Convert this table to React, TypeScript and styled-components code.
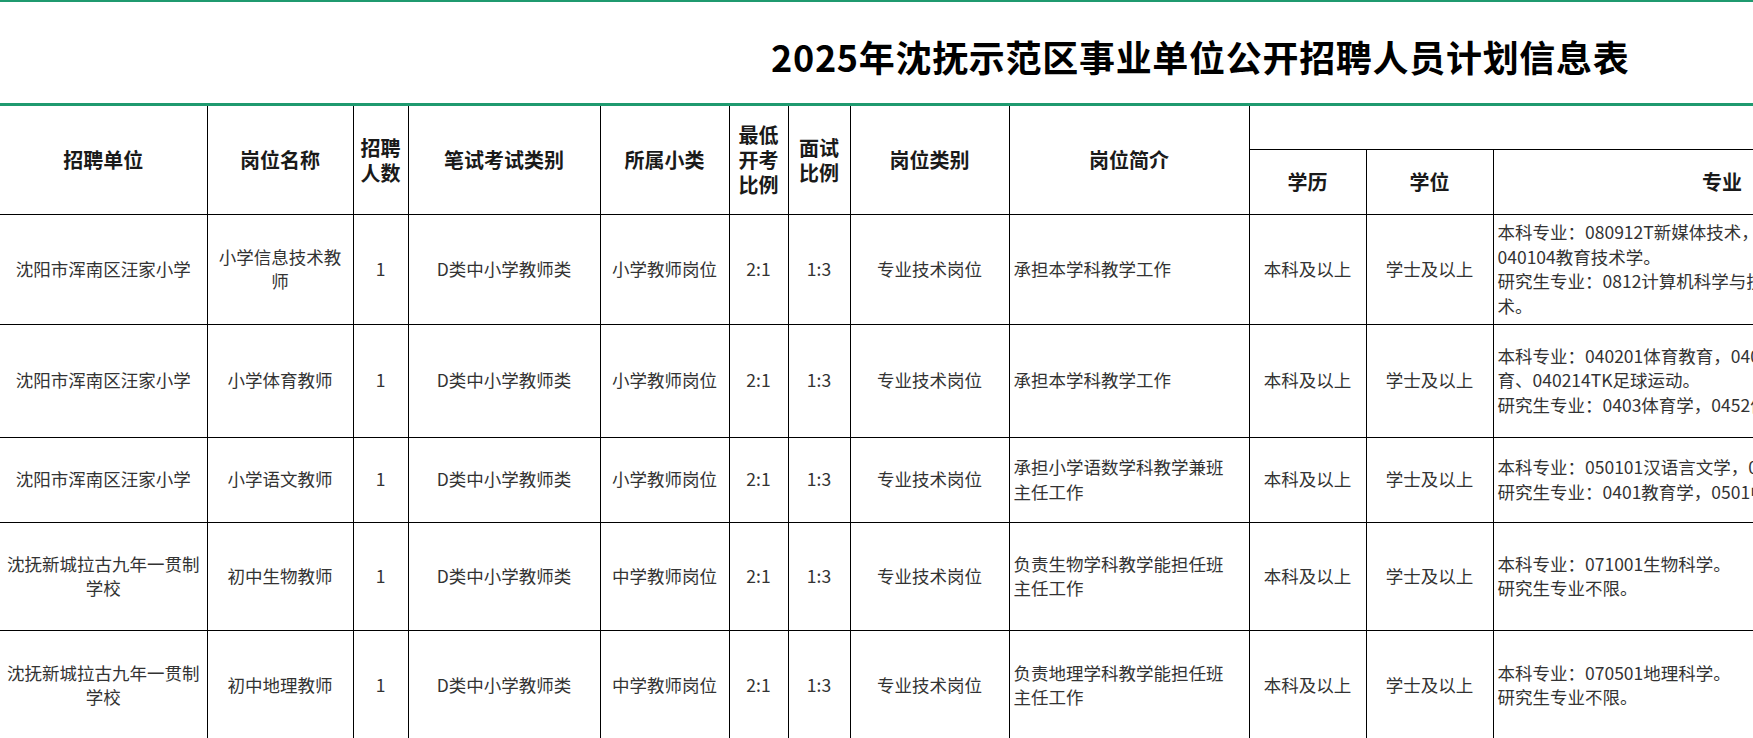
import styled, { createGlobalStyle } from 'styled-components'

const GlobalStyle = createGlobalStyle`
  html, body {
    margin: 0;
    padding: 0;
    background: #fff;
    overflow: hidden;
  }
  body {
    font-family: "Noto Sans CJK SC", "Noto Sans", sans-serif;
  }
`

const Sheet = styled.div`
  width: 1753px;
  height: 738px;
  overflow: hidden;
  border-top: 2px solid #1f9a6f;
  box-sizing: border-box;
`

const TitleBar = styled.div`
  height: 104px;
  box-sizing: border-box;
  display: flex;
  align-items: center;
  padding: 6px 0 0 771px;
  border-bottom: 3px solid #1f9a6f;
`

const Title = styled.h1`
  margin: 0;
  font-size: 36px;
  font-weight: 700;
  color: #000;
  white-space: nowrap;
  letter-spacing: 0.7px;
`

const Grid = styled.table`
  width: 1951px;
  table-layout: fixed;
  border-collapse: collapse;

  thead tr:first-child th:first-child,
  tbody td:first-child {
    border-left: none;
  }
  thead tr:first-child th {
    border-top: none;
  }
`

const Row = styled.tr<{ $h: number }>`
  height: ${p => p.$h}px;
`

const HeadCell = styled.th`
  border: 1px solid #000;
  padding: 0 3px;
  font-size: 20px;
  line-height: 25px;
  font-weight: 700;
  color: #1a1a1a;
  text-align: center;
  vertical-align: middle;
  word-break: break-all;
`

const Cell = styled.td<{ $align?: 'left' | 'center' }>`
  border: 1px solid #000;
  padding: 0 ${p => (p.$align === 'left' ? '4px' : '5px')};
  font-size: 17.5px;
  line-height: 24.5px;
  color: #333;
  text-align: ${p => p.$align || 'center'};
  vertical-align: middle;
  overflow: hidden;
`

const Line = styled.span`
  display: block;
  white-space: nowrap;
`

const colWidths = [207, 146, 55, 192, 129, 59, 62, 159, 240, 117, 127, 458]

type Post = {
  unit: string[]
  name: string[]
  count: string
  exam: string
  sub: string
  open: string
  interview: string
  kind: string
  intro: string[]
  edu: string
  degree: string
  major: string[]
  h: number
}

const posts: Post[] = [
  {
    unit: ['沈阳市浑南区汪家小学'],
    name: ['小学信息技术教', '师'],
    count: '1',
    exam: 'D类中小学教师类',
    sub: '小学教师岗位',
    open: '2:1',
    interview: '1:3',
    kind: '专业技术岗位',
    intro: ['承担本学科教学工作'],
    edu: '本科及以上',
    degree: '学士及以上',
    major: [
      '本科专业：080912T新媒体技术，080901计算机科学与技术，',
      '040104教育技术学。',
      '研究生专业：0812计算机科学与技术，0775计算机科学与技',
      '术。',
    ],
    h: 110,
  },
  {
    unit: ['沈阳市浑南区汪家小学'],
    name: ['小学体育教师'],
    count: '1',
    exam: 'D类中小学教师类',
    sub: '小学教师岗位',
    open: '2:1',
    interview: '1:3',
    kind: '专业技术岗位',
    intro: ['承担本学科教学工作'],
    edu: '本科及以上',
    degree: '学士及以上',
    major: [
      '本科专业：040201体育教育，040202K运动训练，040207T休闲体',
      '育、040214TK足球运动。',
      '研究生专业：0403体育学，0452体育。',
    ],
    h: 113,
  },
  {
    unit: ['沈阳市浑南区汪家小学'],
    name: ['小学语文教师'],
    count: '1',
    exam: 'D类中小学教师类',
    sub: '小学教师岗位',
    open: '2:1',
    interview: '1:3',
    kind: '专业技术岗位',
    intro: ['承担小学语数学科教学兼班', '主任工作'],
    edu: '本科及以上',
    degree: '学士及以上',
    major: [
      '本科专业：050101汉语言文学，040107小学教育。',
      '研究生专业：0401教育学，0501中国语言文学。',
    ],
    h: 85,
  },
  {
    unit: ['沈抚新城拉古九年一贯制', '学校'],
    name: ['初中生物教师'],
    count: '1',
    exam: 'D类中小学教师类',
    sub: '中学教师岗位',
    open: '2:1',
    interview: '1:3',
    kind: '专业技术岗位',
    intro: ['负责生物学科教学能担任班', '主任工作'],
    edu: '本科及以上',
    degree: '学士及以上',
    major: ['本科专业：071001生物科学。', '研究生专业不限。'],
    h: 108,
  },
  {
    unit: ['沈抚新城拉古九年一贯制', '学校'],
    name: ['初中地理教师'],
    count: '1',
    exam: 'D类中小学教师类',
    sub: '中学教师岗位',
    open: '2:1',
    interview: '1:3',
    kind: '专业技术岗位',
    intro: ['负责地理学科教学能担任班', '主任工作'],
    edu: '本科及以上',
    degree: '学士及以上',
    major: ['本科专业：070501地理科学。', '研究生专业不限。'],
    h: 110,
  },
]

const lines = (items: string[]) => items.map((t, i) => <Line key={i}>{t}</Line>)

export default function App() {
  return (
    <>
      <GlobalStyle />
      <Sheet>
        <TitleBar>
          <Title>2025年沈抚示范区事业单位公开招聘人员计划信息表</Title>
        </TitleBar>

        <Grid>
          <colgroup>
            {colWidths.map((w, i) => (
              <col key={i} style={{ width: w }} />
            ))}
          </colgroup>
          <thead>
            <Row $h={43}>
              <HeadCell rowSpan={2}>招聘单位</HeadCell>
              <HeadCell rowSpan={2}>岗位名称</HeadCell>
              <HeadCell rowSpan={2}>招聘人数</HeadCell>
              <HeadCell rowSpan={2}>笔试考试类别</HeadCell>
              <HeadCell rowSpan={2}>所属小类</HeadCell>
              <HeadCell rowSpan={2}>最低开考比例</HeadCell>
              <HeadCell rowSpan={2}>面试比例</HeadCell>
              <HeadCell rowSpan={2}>岗位类别</HeadCell>
              <HeadCell rowSpan={2}>岗位简介</HeadCell>
              <HeadCell colSpan={3}></HeadCell>
            </Row>
            <Row $h={65}>
              <HeadCell>学历</HeadCell>
              <HeadCell>学位</HeadCell>
              <HeadCell>专业</HeadCell>
            </Row>
          </thead>
          <tbody>
            {posts.map((p, i) => (
              <Row key={i} $h={p.h}>
                <Cell>{lines(p.unit)}</Cell>
                <Cell>{lines(p.name)}</Cell>
                <Cell>{p.count}</Cell>
                <Cell>{p.exam}</Cell>
                <Cell>{p.sub}</Cell>
                <Cell>{p.open}</Cell>
                <Cell>{p.interview}</Cell>
                <Cell>{p.kind}</Cell>
                <Cell $align="left">{lines(p.intro)}</Cell>
                <Cell>{p.edu}</Cell>
                <Cell>{p.degree}</Cell>
                <Cell $align="left">{lines(p.major)}</Cell>
              </Row>
            ))}
          </tbody>
        </Grid>
      </Sheet>
    </>
  )
}
